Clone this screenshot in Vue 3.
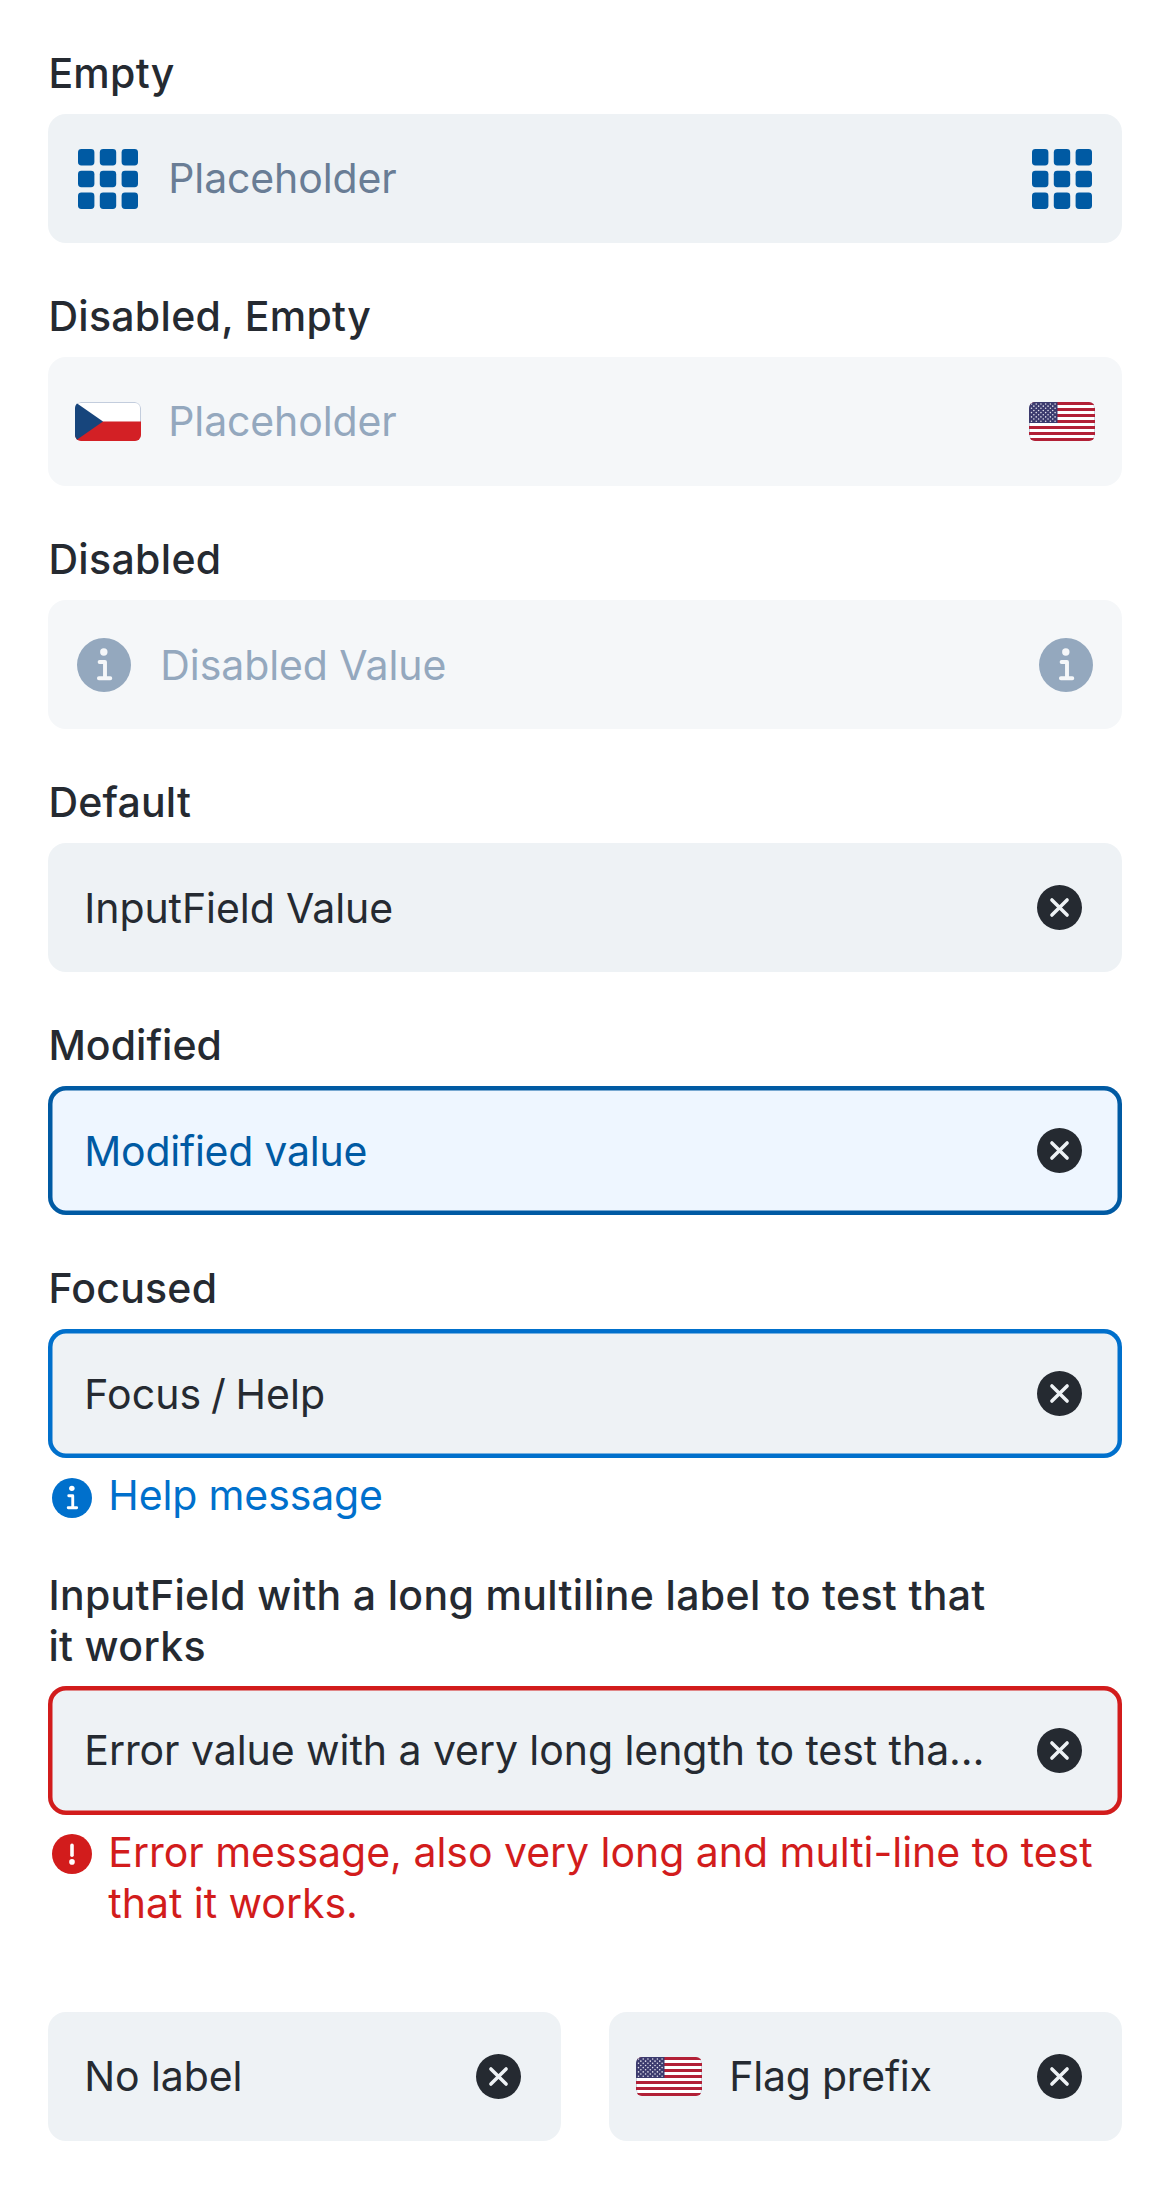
<script setup>
import { h } from 'vue'

const GridIcon = () =>
  h('svg', { width: 60, height: 60, viewBox: '0 0 60 60', fill: 'currentColor' },
    [0, 21.8, 43.6].flatMap((y) =>
      [0, 21.8, 43.6].map((x) => h('rect', { x, y, width: 16.4, height: 16.4, rx: 3.4 }))))

const InfoIcon = (props) =>
  h('svg', { width: props.size, height: props.size, viewBox: '0 0 54 54' }, [
    h('circle', { cx: 27, cy: 27, r: 27, fill: 'currentColor' }),
    h('circle', { cx: 26.8, cy: 14, r: 3.7, fill: props.ink }),
    h('path', {
      d: 'M22.6 24H28V40M21.9 40.2H33.3',
      fill: 'none', stroke: props.ink, 'stroke-width': 3.9,
      'stroke-linecap': 'round', 'stroke-linejoin': 'round',
    }),
  ])
InfoIcon.props = ['size', 'ink']

const AlertIcon = () =>
  h('svg', { width: 40, height: 40, viewBox: '0 0 40 40' }, [
    h('circle', { cx: 20, cy: 20, r: 20, fill: 'currentColor' }),
    h('path', { d: 'M20 11.4V21.2', stroke: '#fff', 'stroke-width': 3.6, 'stroke-linecap': 'round' }),
    h('circle', { cx: 20, cy: 27.9, r: 2.8, fill: '#fff' }),
  ])

const ClearIcon = () =>
  h('svg', { width: 45, height: 45, viewBox: '0 0 45 45' }, [
    h('circle', { cx: 22.5, cy: 22.5, r: 22.5, fill: '#252a31' }),
    h('path', {
      d: 'M14.9 14.9L30.1 30.1M30.1 14.9L14.9 30.1',
      stroke: '#eef2f5', 'stroke-width': 3.5, 'stroke-linecap': 'round',
    }),
  ])

const CzechFlag = () =>
  h('svg', { class: 'flag', width: 66, height: 39, viewBox: '0 0 66 39' }, [
    h('path', { d: 'M0 0H66V19.5H0z', fill: '#fff' }),
    h('rect', { x: 0.5, y: 0.5, width: 65, height: 38, rx: 5.5, fill: 'none', stroke: '#c3cddd' }),
    h('path', { d: 'M0 19.5H66V39H0z', fill: '#d32025' }),
    h('path', { d: 'M0 0L28 19.5L0 39z', fill: '#17457c' }),
  ])

const stars = Array.from({ length: 9 }, (_, r) =>
  Array.from({ length: r % 2 ? 5 : 6 }, (_, c) => ({
    x: 2.5 + c * 4.72 + (r % 2 ? 2.36 : 0),
    y: 2 + r * 2.15,
  }))).flat()

const UsFlag = () =>
  h('svg', { class: 'flag', width: 66, height: 39, viewBox: '0 0 66 39' }, [
    h('path', { d: 'M0 0H66V39H0z', fill: '#fff' }),
    h('rect', { x: 0.5, y: 0.5, width: 65, height: 38, rx: 5.5, fill: 'none', stroke: '#c9cfdc' }),
    ...Array.from({ length: 7 }, (_, i) =>
      h('rect', { x: 0, y: i * 6, width: 66, height: 3, fill: '#b22036' })),
    h('path', { d: 'M0 0H28.5V21H0z', fill: '#3c3b6e' }),
    ...stars.map((s) => h('circle', { cx: s.x, cy: s.y, r: 0.78, fill: '#e4e4ee' })),
  ])

const fields = [
  { label: 'Empty', labelTrack: 0.25, value: 'Placeholder', track: -0.13, tone: 'placeholder', icon: 'grid', suffix: 'grid' },
  { label: 'Disabled, Empty', labelTrack: 0.3, value: 'Placeholder', track: -0.13, tone: 'disabled', icon: 'cz', suffix: 'us' },
  { label: 'Disabled', labelTrack: 0.34, value: 'Disabled Value', track: -0.08, tone: 'disabled', low: true, icon: 'info', suffix: 'info' },
  { label: 'Default', labelTrack: 0.2, value: 'InputField Value', track: -0.07, low: true, suffix: 'clear' },
  { label: 'Modified', labelTrack: 0.04, value: 'Modified value', track: -0.25, tone: 'modified', low: true, suffix: 'clear' },
  {
    label: 'Focused', labelTrack: 0.22, value: 'Focus / Help', track: 0.1, words: -2, tone: 'focused', low: true, suffix: 'clear',
    message: { kind: 'help', text: 'Help message', track: -0.13 },
  },
  {
    label: 'InputField with a long multiline label to test that it works', labelTrack: 0.34, long: true,
    value: 'Error value with a very long length to test that it works', track: -0.06, tone: 'error', suffix: 'clear',
    message: { kind: 'error', text: 'Error message, also very long and multi-line to test that it works.', track: -0.03 },
  },
  { row: true, value: 'No label', track: -0.12, suffix: 'clear' },
  { row: true, value: 'Flag prefix', track: -0.25, icon: 'us', suffix: 'clear' },
]

const icons = { grid: GridIcon, info: InfoIcon, clear: ClearIcon, cz: CzechFlag, us: UsFlag }
const iconProps = (name) => (name === 'info' ? { size: 54, ink: '#f5f7f9' } : {})
const spacing = (letters, words = 0) => ({ letterSpacing: letters + 'px', wordSpacing: words + 'px' })
</script>

<template>
  <main class="page">
    <div v-for="f in fields" :key="f.label || f.value" class="group" :class="{ half: f.row }">
      <div v-if="f.label" class="label" :class="{ long: f.long }" :style="spacing(f.labelTrack)">{{ f.label }}</div>
      <div class="field" :class="[f.tone, f.icon && 'with-' + f.icon, 'end-' + f.suffix]">
        <component :is="icons[f.icon]" v-if="f.icon" v-bind="iconProps(f.icon)" class="icon" />
        <span class="value" :class="{ low: f.low }" :style="spacing(f.track, f.words)">{{ f.value }}</span>
        <component :is="icons[f.suffix]" v-bind="iconProps(f.suffix)" class="icon" />
      </div>
      <div v-if="f.message" class="message" :class="f.message.kind">
        <InfoIcon v-if="f.message.kind === 'help'" class="icon" :size="40" ink="#fff" />
        <AlertIcon v-else class="icon" />
        <span :style="spacing(f.message.track)">{{ f.message.text }}</span>
      </div>
    </div>
  </main>
</template>

<style>
body {
  background: #fff;
}
.flag {
  border-radius: 6px;
}
</style>

<style scoped>
.page {
  box-sizing: border-box;
  height: 2189px;
  padding: 48px 48px 0;
  display: flex;
  flex-wrap: wrap;
  align-content: flex-start;
  gap: 48px;
  font: 400 41px/51px Inter, "Liberation Sans", sans-serif;
  color: #252a31;
}
.group {
  width: 100%;
}
.half {
  width: 513px;
  margin-top: 35px;
}
.label {
  box-sizing: border-box;
  width: 960px;
  padding-left: 0.4px;
  margin-bottom: 15px;
  font-weight: 500;
}
.label.long {
  padding-top: 1px;
  margin-bottom: 14px;
}
.field {
  box-sizing: border-box;
  height: 129px;
  padding-left: 36px;
  display: flex;
  align-items: center;
  border-radius: 18px;
  background: #eef2f5;
}
.icon {
  display: block;
  flex: none;
}
.value {
  flex: 1;
  min-width: 0;
  margin-right: 48px;
  padding-left: 0.3px;
  overflow: hidden;
  white-space: nowrap;
  text-overflow: ellipsis;
}
.value.low {
  padding-top: 2px;
}
.with-grid {
  padding-left: 30px;
}
.with-grid .value {
  margin-left: 30px;
}
.with-cz,
.with-us {
  padding-left: 27px;
}
.with-cz .value,
.with-us .value {
  margin-left: 27px;
}
.with-info {
  padding-left: 29px;
}
.with-info .value {
  margin-left: 29px;
}
.end-grid {
  padding-right: 30px;
  color: #005aa3;
}
.end-us {
  padding-right: 27px;
}
.end-info {
  padding-right: 29px;
}
.end-clear {
  padding-right: 40px;
}
.placeholder .value {
  color: #697d95;
}
.disabled {
  background: #f5f7f9;
  color: #94a8be;
}
.modified {
  background: #eef6ff;
  color: #005aa3;
  box-shadow: inset 0 0 0 4.5px #005aa3;
}
.focused {
  box-shadow: inset 0 0 0 4.5px #0070cc;
}
.error.field {
  box-shadow: inset 0 0 0 4.5px #d21c1c;
}
.message {
  display: flex;
  align-items: flex-start;
  gap: 16.3px;
  padding: 12px 20px 0 4px;
}
.message .icon {
  margin-top: 8px;
}
.help {
  color: #0070cc;
}
.message.error {
  color: #d21c1c;
}
.message.error .icon {
  margin-top: 7px;
}
</style>
